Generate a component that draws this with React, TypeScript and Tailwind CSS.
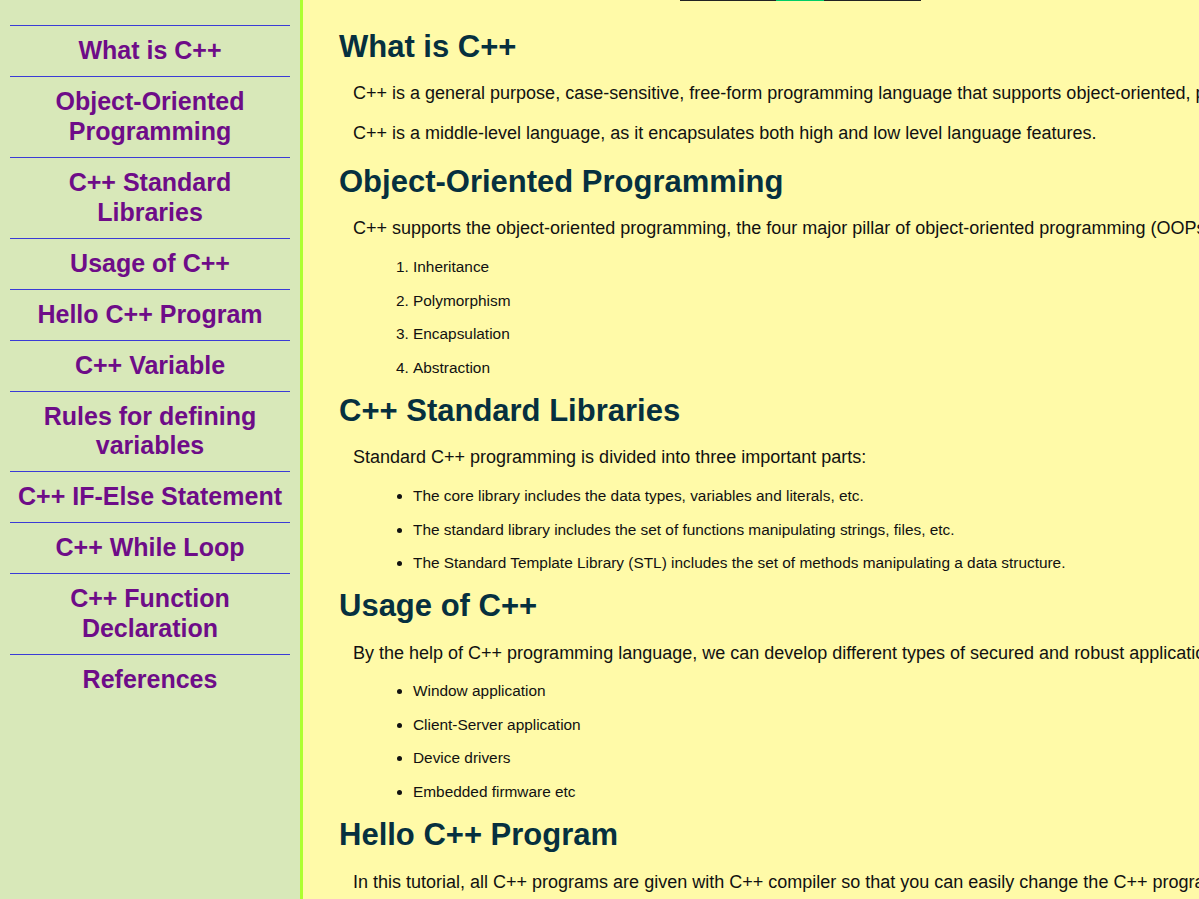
const navItems = [
  "What is C++",
  "Object-Oriented Programming",
  "C++ Standard Libraries",
  "Usage of C++",
  "Hello C++ Program",
  "C++ Variable",
  "Rules for defining variables",
  "C++ IF-Else Statement",
  "C++ While Loop",
  "C++ Function Declaration",
  "References",
];

function Heading({ children, mt }: { children: React.ReactNode; mt: string }) {
  return <h2 className={`text-[31px] leading-[36px] font-bold text-[#06303f] whitespace-nowrap ${mt}`}>{children}</h2>;
}

function Para({ children, mt }: { children: React.ReactNode; mt: string }) {
  return <p className={`pl-[14px] text-[18px] leading-[20px] text-[#111] whitespace-nowrap ${mt}`}>{children}</p>;
}

export default function App() {
  return (
    <div className="relative flex h-[899px] w-full overflow-hidden font-['Liberation_Sans',Arial,sans-serif]">
      {/* top progress strip */}
      <div className="absolute left-[680px] top-0 flex h-px w-[241px]">
        <div className="w-[96px] bg-[#222]" />
        <div className="w-[48px] bg-[#00cc66]" />
        <div className="flex-1 bg-[#222]" />
      </div>

      <nav className="w-[303px] shrink-0 border-r-[3px] border-[#adff2f] bg-[#d8e8b9] px-[10px] pt-[25px]">
        {navItems.map((item) => (
          <div
            key={item}
            className="border-t border-[#3b3bd6] px-[6px] py-[10px] text-center text-[25px] font-bold leading-[29.93px] text-[#6e0c88]"
          >
            {item}
          </div>
        ))}
      </nav>

      <main className="flex-1 overflow-hidden bg-[#fffaa8] pl-[36px] pt-[29px]">
        <div className="flex flex-col">
          <Heading mt="mt-0">What is C++</Heading>
          <Para mt="mt-[18px]">
            C++ is a general purpose, case-sensitive, free-form programming language that supports object-oriented, procedural and generic programming.
          </Para>
          <Para mt="mt-[20px]">C++ is a middle-level language, as it encapsulates both high and low level language features.</Para>

          <Heading mt="mt-[21px]">Object-Oriented Programming</Heading>
          <Para mt="mt-[18px]">
            C++ supports the object-oriented programming, the four major pillar of object-oriented programming (OOPs) used in C++ are:
          </Para>
          <ol className="mt-[20px] list-decimal pl-[74px] text-[15.4px] leading-[18px] text-[#111]">
            <li>Inheritance</li>
            <li className="mt-[15.5px]">Polymorphism</li>
            <li className="mt-[15.5px]">Encapsulation</li>
            <li className="mt-[15.5px]">Abstraction</li>
          </ol>

          <Heading mt="mt-[16.5px]">C++ Standard Libraries</Heading>
          <Para mt="mt-[18px]">Standard C++ programming is divided into three important parts:</Para>
          <ul className="mt-[20px] list-disc pl-[74px] text-[15.4px] leading-[18px] text-[#111]">
            <li>The core library includes the data types, variables and literals, etc.</li>
            <li className="mt-[15.5px]">The standard library includes the set of functions manipulating strings, files, etc.</li>
            <li className="mt-[15.5px]">The Standard Template Library (STL) includes the set of methods manipulating a data structure.</li>
          </ul>

          <Heading mt="mt-[16px]">Usage of C++</Heading>
          <Para mt="mt-[19px]">
            By the help of C++ programming language, we can develop different types of secured and robust applications:
          </Para>
          <ul className="mt-[19px] list-disc pl-[74px] text-[15.4px] leading-[18px] text-[#111]">
            <li>Window application</li>
            <li className="mt-[15.5px]">Client-Server application</li>
            <li className="mt-[15.5px]">Device drivers</li>
            <li className="mt-[15.5px]">Embedded firmware etc</li>
          </ul>

          <Heading mt="mt-[16px]">Hello C++ Program</Heading>
          <Para mt="mt-[19px]">
            In this tutorial, all C++ programs are given with C++ compiler so that you can easily change the C++ program code.
          </Para>
        </div>
      </main>
    </div>
  );
}
